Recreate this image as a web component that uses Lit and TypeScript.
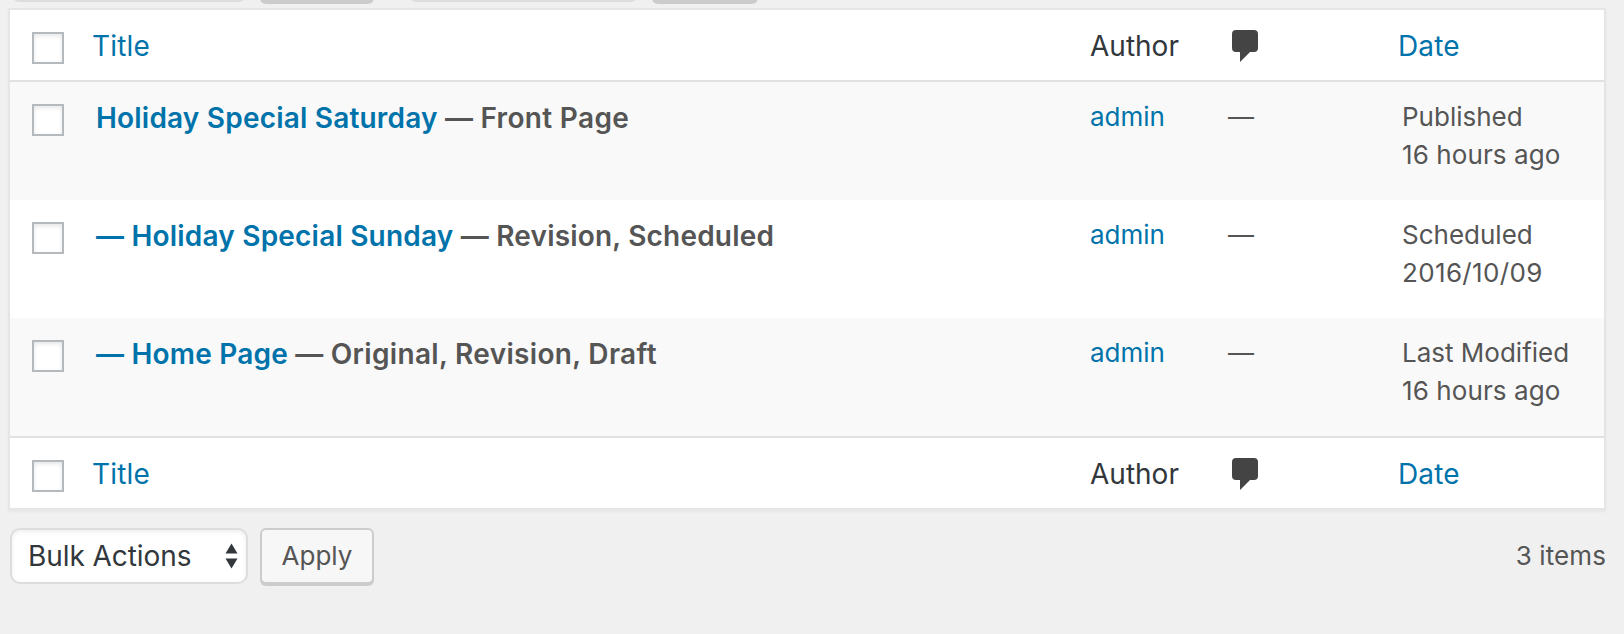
import { LitElement, html, css, svg } from "lit";
import { customElement, property } from "lit/decorators.js";

interface Row {
  dash: boolean;
  title: string;
  states: string;
  status: string;
  when: string;
}

const ROWS: Row[] = [
  { dash: false, title: "Holiday Special Saturday", states: "Front Page", status: "Published", when: "16 hours ago" },
  { dash: true, title: "Holiday Special Sunday", states: "Revision, Scheduled", status: "Scheduled", when: "2016/10/09" },
  { dash: true, title: "Home Page", states: "Original, Revision, Draft", status: "Last Modified", when: "16 hours ago" },
];

@customElement("app-root")
export class AppRoot extends LitElement {
  @property({ attribute: false }) rows: Row[] = ROWS;

  static styles = css`
    :host {
      display: block;
      box-sizing: border-box;
      height: 634px;
      overflow: hidden;
      background: #f0f0f0;
      color: #555;
      font-family: Inter, "Liberation Sans", sans-serif;
      font-size: 26px;
      line-height: 38px;
      white-space: nowrap;
    }
    * { box-sizing: border-box; }
    a { color: #0073aa; text-decoration: none; }
    .filters { display: flex; align-items: flex-end; gap: 12px; height: 4px; margin: 0 0 4px 10px; overflow: hidden; }
    .select {
      flex: none; width: 238px; height: 56px; border: 2px solid #ddd; border-radius: 10px;
      background: #fff; box-shadow: inset 0 2px 4px rgba(0, 0, 0, 0.07);
    }
    .button {
      flex: none; width: 114px; height: 56px; border: 2px solid #ccc; border-radius: 6px;
      background: #f7f7f7; box-shadow: 0 2px 0 #ccc; margin-bottom: 2px;
    }
    .filters .select { margin-bottom: 2px; }
    .filters .dates { width: 233px; margin-left: 21px; }
    .filters .filter { width: 106px; }
    .table { width: 1598px; margin-left: 8px; border: 2px solid #e5e5e5; background: #fff; box-shadow: 0 2px 2px rgba(0, 0, 0, 0.04); }
    .line { display: grid; grid-template-columns: 82px 998px 138px 170px 1fr; align-items: start; }
    .bar { height: 72px; padding-top: 16px; font-size: 28px; line-height: 40px; color: #32373c; }
    .head { border-bottom: 2px solid #e1e1e1; }
    .foot { border-top: 2px solid #e1e1e1; }
    .sort { letter-spacing: 0.15px; }
    .row { height: 118px; padding-top: 16px; }
    .row:nth-child(even) { background: #f9f9f9; }
    .check { width: 32px; height: 32px; margin: 6px 0 0 22px; border: 2px solid #b4b9be; background: #fff; box-shadow: inset 0 2px 4px rgba(0, 0, 0, 0.1); }
    .foot .check { margin-top: 6px; }
    .title { padding-left: 4px; font-size: 28px; font-weight: 600; line-height: 40px; letter-spacing: 0.2px; }
    .row:nth-child(even) .states { letter-spacing: 0.33px; }
    .bubble { display: block; width: 26px; height: 32px; margin: 4px 0 0 4px; fill: #444; }
    .date { padding-left: 4px; }
    .when { letter-spacing: 0.1px; }
    .numeric { letter-spacing: 0.35px; }
    .actions { display: flex; align-items: flex-start; gap: 12px; margin: 18px 18px 0 10px; }
    .actions .select { display: flex; align-items: center; justify-content: space-between; padding: 0 8px 0 16px; font-size: 28px; color: #32373c; letter-spacing: -0.07px; }
    .arrows { width: 13px; height: 26px; fill: #32373c; }
    .actions .button { display: flex; align-items: center; justify-content: center; }
    .count { margin-left: auto; padding-top: 9px; letter-spacing: 0.1px; }
  `;

  bar(kind: string) {
    return html`<div class="line bar ${kind}">
      <span class="check"></span>
      <a class="sort">Title</a>
      <span>Author</span>
      <span>${svg`<svg class="bubble" viewBox="0 0 26 32"><path d="M4 0H22Q26 0 26 4V18Q26 22 22 22H18L8 32V22H4Q0 22 0 18V4Q0 0 4 0Z"/></svg>`}</span>
      <a class="sort">Date</a>
    </div>`;
  }

  render() {
    return html`
      <div class="filters">
        <span class="select"></span><span class="button"></span>
        <span class="select dates"></span><span class="button filter"></span>
      </div>
      <div class="table">
        ${this.bar("head")}
        ${this.rows.map((r) => html`<div class="line row">
          <span class="check"></span>
          <span class="title"><a>${r.dash ? "— " : ""}${r.title}</a> — <span class="states">${r.states}</span></span>
          <a>admin</a>
          <span>—</span>
          <span class="date">${r.status}<br /><span class=${r.when.includes("/") ? "numeric" : "when"}>${r.when}</span></span>
        </div>`)}
        ${this.bar("foot")}
      </div>
      <div class="actions">
        <span class="select">Bulk Actions${svg`<svg class="arrows" viewBox="0 0 13 26"><path d="M0.5 10.5L6.5 0.5L12.5 10.5ZM0.5 15.5H12.5L6.5 25.5Z"/></svg>`}</span>
        <span class="button">Apply</span>
        <span class="count">3 items</span>
      </div>
    `;
  }
}
